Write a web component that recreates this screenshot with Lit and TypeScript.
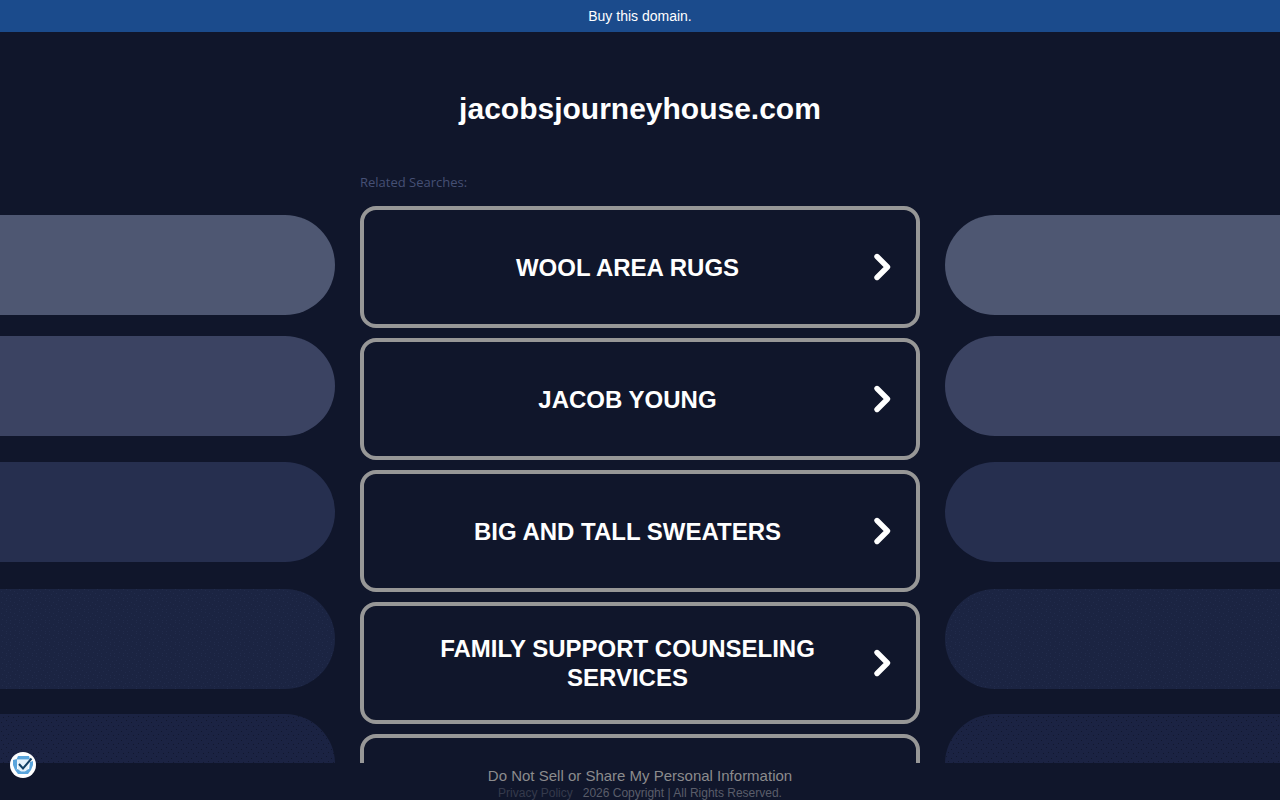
import { LitElement, html, svg, css } from "lit";
import { customElement } from "lit/decorators.js";

const SEARCHES = [
  "Wool Area Rugs",
  "Jacob Young",
  "Big and Tall Sweaters",
  "Family Support Counseling Services",
  "",
];

const PILLS = [
  { y: 0, fill: "#4e5772" },
  { y: 121, fill: "#3b4362" },
  { y: 247, fill: "#262f4f" },
  { y: 374, fill: "url(#grain-light)" },
  { y: 499, fill: "url(#grain-dark)" },
];

@customElement("side-pills")
export class SidePills extends LitElement {
  static styles = css`
    :host {
      display: flex;
      min-width: 0;
      overflow: hidden;
    }
    .art {
      flex: none;
      display: block;
    }
  `;

  render() {
    return html`<svg class="art" width="1600" height="600" aria-hidden="true">
      <defs>
        <pattern id="grain-light" width="13" height="11" patternUnits="userSpaceOnUse">
          <rect width="13" height="11" fill="#1b2442" />
          <path d="M1 1h1v1h-1zM5 2h1v1h-1zM10 0h1v1h-1zM3 5h1v1h-1zM8 4h1v1h-1zM12 6h1v1h-1zM6 8h1v1h-1zM1 9h1v1h-1zM10 9h1v1h-1z" fill="#212b4b" />
        </pattern>
        <pattern id="grain-dark" width="10" height="9" patternUnits="userSpaceOnUse">
          <rect width="10" height="9" fill="#1b2343" />
          <path d="M1 1h1v1h-1zM6 3h1v1h-1zM3 6h1v1h-1zM8 7h1v1h-1z" fill="#12182f" />
        </pattern>
      </defs>
      ${PILLS.map((p) => svg`<rect y=${p.y} width="1600" height="100" rx="50" fill=${p.fill} />`)}
    </svg>`;
  }
}

@customElement("app-root")
export class AppRoot extends LitElement {
  static styles = css`
    :host {
      display: flex;
      flex-direction: column;
      height: 100vh;
      overflow: hidden;
      position: relative;
      background: #10162b;
      color: #fff;
      font-family: "Liberation Sans", Arial, sans-serif;
    }
    a {
      color: inherit;
      text-decoration: none;
    }
    .banner {
      flex: none;
      background: #1b4b8c;
      text-align: center;
      font-size: 14px;
      line-height: 32px;
    }
    .page {
      flex: 1;
      min-height: 0;
      overflow: hidden;
    }
    .domain {
      margin: 0;
      padding: 57px 16px 48px;
      text-align: center;
      font-size: 30px;
      line-height: 40px;
    }
    .columns {
      display: grid;
      grid-template-columns: minmax(0, 1fr) minmax(0, 560px) minmax(0, 1fr);
      column-gap: 25px;
    }
    side-pills {
      margin-top: 38px;
    }
    .left {
      justify-content: flex-end;
    }
    .label {
      margin: 0 0 19px;
      color: #465075;
      font-family: "Open Sans", sans-serif;
      font-size: 13px;
      font-weight: 500;
      line-height: 10px;
    }
    .list {
      display: flex;
      flex-direction: column;
      gap: 10px;
      margin: 0;
      padding: 0;
      list-style: none;
    }
    .card {
      box-sizing: border-box;
      display: flex;
      align-items: center;
      min-height: 122px;
      padding: 0 24px 0 40px;
      border: 4px solid #979797;
      border-radius: 16px;
      font-size: 24px;
      font-weight: 700;
      line-height: 29px;
      text-align: center;
      text-transform: uppercase;
    }
    .text {
      flex: 1;
      padding-right: 21px;
    }
    .arrow {
      flex: none;
      width: 20px;
      height: 30px;
    }
    .footer {
      flex: none;
      height: 37px;
      text-align: center;
    }
    .rights {
      display: block;
      padding-top: 3px;
      color: #8b8b8d;
      font-size: 15px;
      line-height: 20px;
    }
    .legal {
      display: flex;
      justify-content: center;
      gap: 10px;
      padding-top: 1px;
      color: #5a5d6a;
      font-size: 12px;
      line-height: 13px;
    }
    .privacy {
      color: #353a4c;
    }
    .consent {
      position: absolute;
      left: 10px;
      bottom: 22px;
      width: 26px;
      height: 26px;
      padding: 0;
      border: 0;
      border-radius: 50%;
      background: #fff;
    }
    .consent svg {
      display: block;
    }
  `;

  render() {
    return html`
      <a class="banner" href="#">Buy this domain.</a>
      <main class="page">
        <h1 class="domain">jacobsjourneyhouse.com</h1>
        <div class="columns">
          <side-pills class="left"></side-pills>
          <section>
            <h2 class="label">Related Searches:</h2>
            <ul class="list">
              ${SEARCHES.map(
                (s) => html`<li>
                  <a class="card" href="#">
                    <span class="text">${s}</span>
                    <svg class="arrow" viewBox="0 0 20 30" aria-hidden="true">
                      <path d="M5 4.500 15.500 15 5 25.500" fill="none" stroke="#fff" stroke-width="5.400" stroke-linecap="round" stroke-linejoin="round" />
                    </svg>
                  </a>
                </li>`
              )}
            </ul>
          </section>
          <side-pills></side-pills>
        </div>
      </main>
      <footer class="footer">
        <a class="rights" href="#">Do Not Sell or Share My Personal Information</a>
        <div class="legal">
          <a class="privacy" href="#">Privacy Policy</a>
          <span>2026 Copyright | All Rights Reserved.</span>
        </div>
      </footer>
      <button class="consent" type="button" aria-label="Privacy settings">
        <svg width="26" height="26" viewBox="0 0 26 26" aria-hidden="true">
          <path d="M8 4h11l1 3.500H6.500zM3 8l4-1v10l-2 1-2-5zM23 9l-3 1-1 8 2 0 2-5zM5 18l3-1 5 4-1 1H8zM21 18l-3-1-5 4 1 1h4z" fill="#5aa5dc" />
          <path d="M7 8h12l-1 9-5 4-5-4z" fill="#e4f1fa" />
          <path d="M7.500 19.500h11l-2 2.500h-7z" fill="#5aa5dc" />
          <path d="M9 12l4 4.500L21.500 6.500" fill="none" stroke="#123f63" stroke-width="2" />
        </svg>
      </button>
    `;
  }
}
